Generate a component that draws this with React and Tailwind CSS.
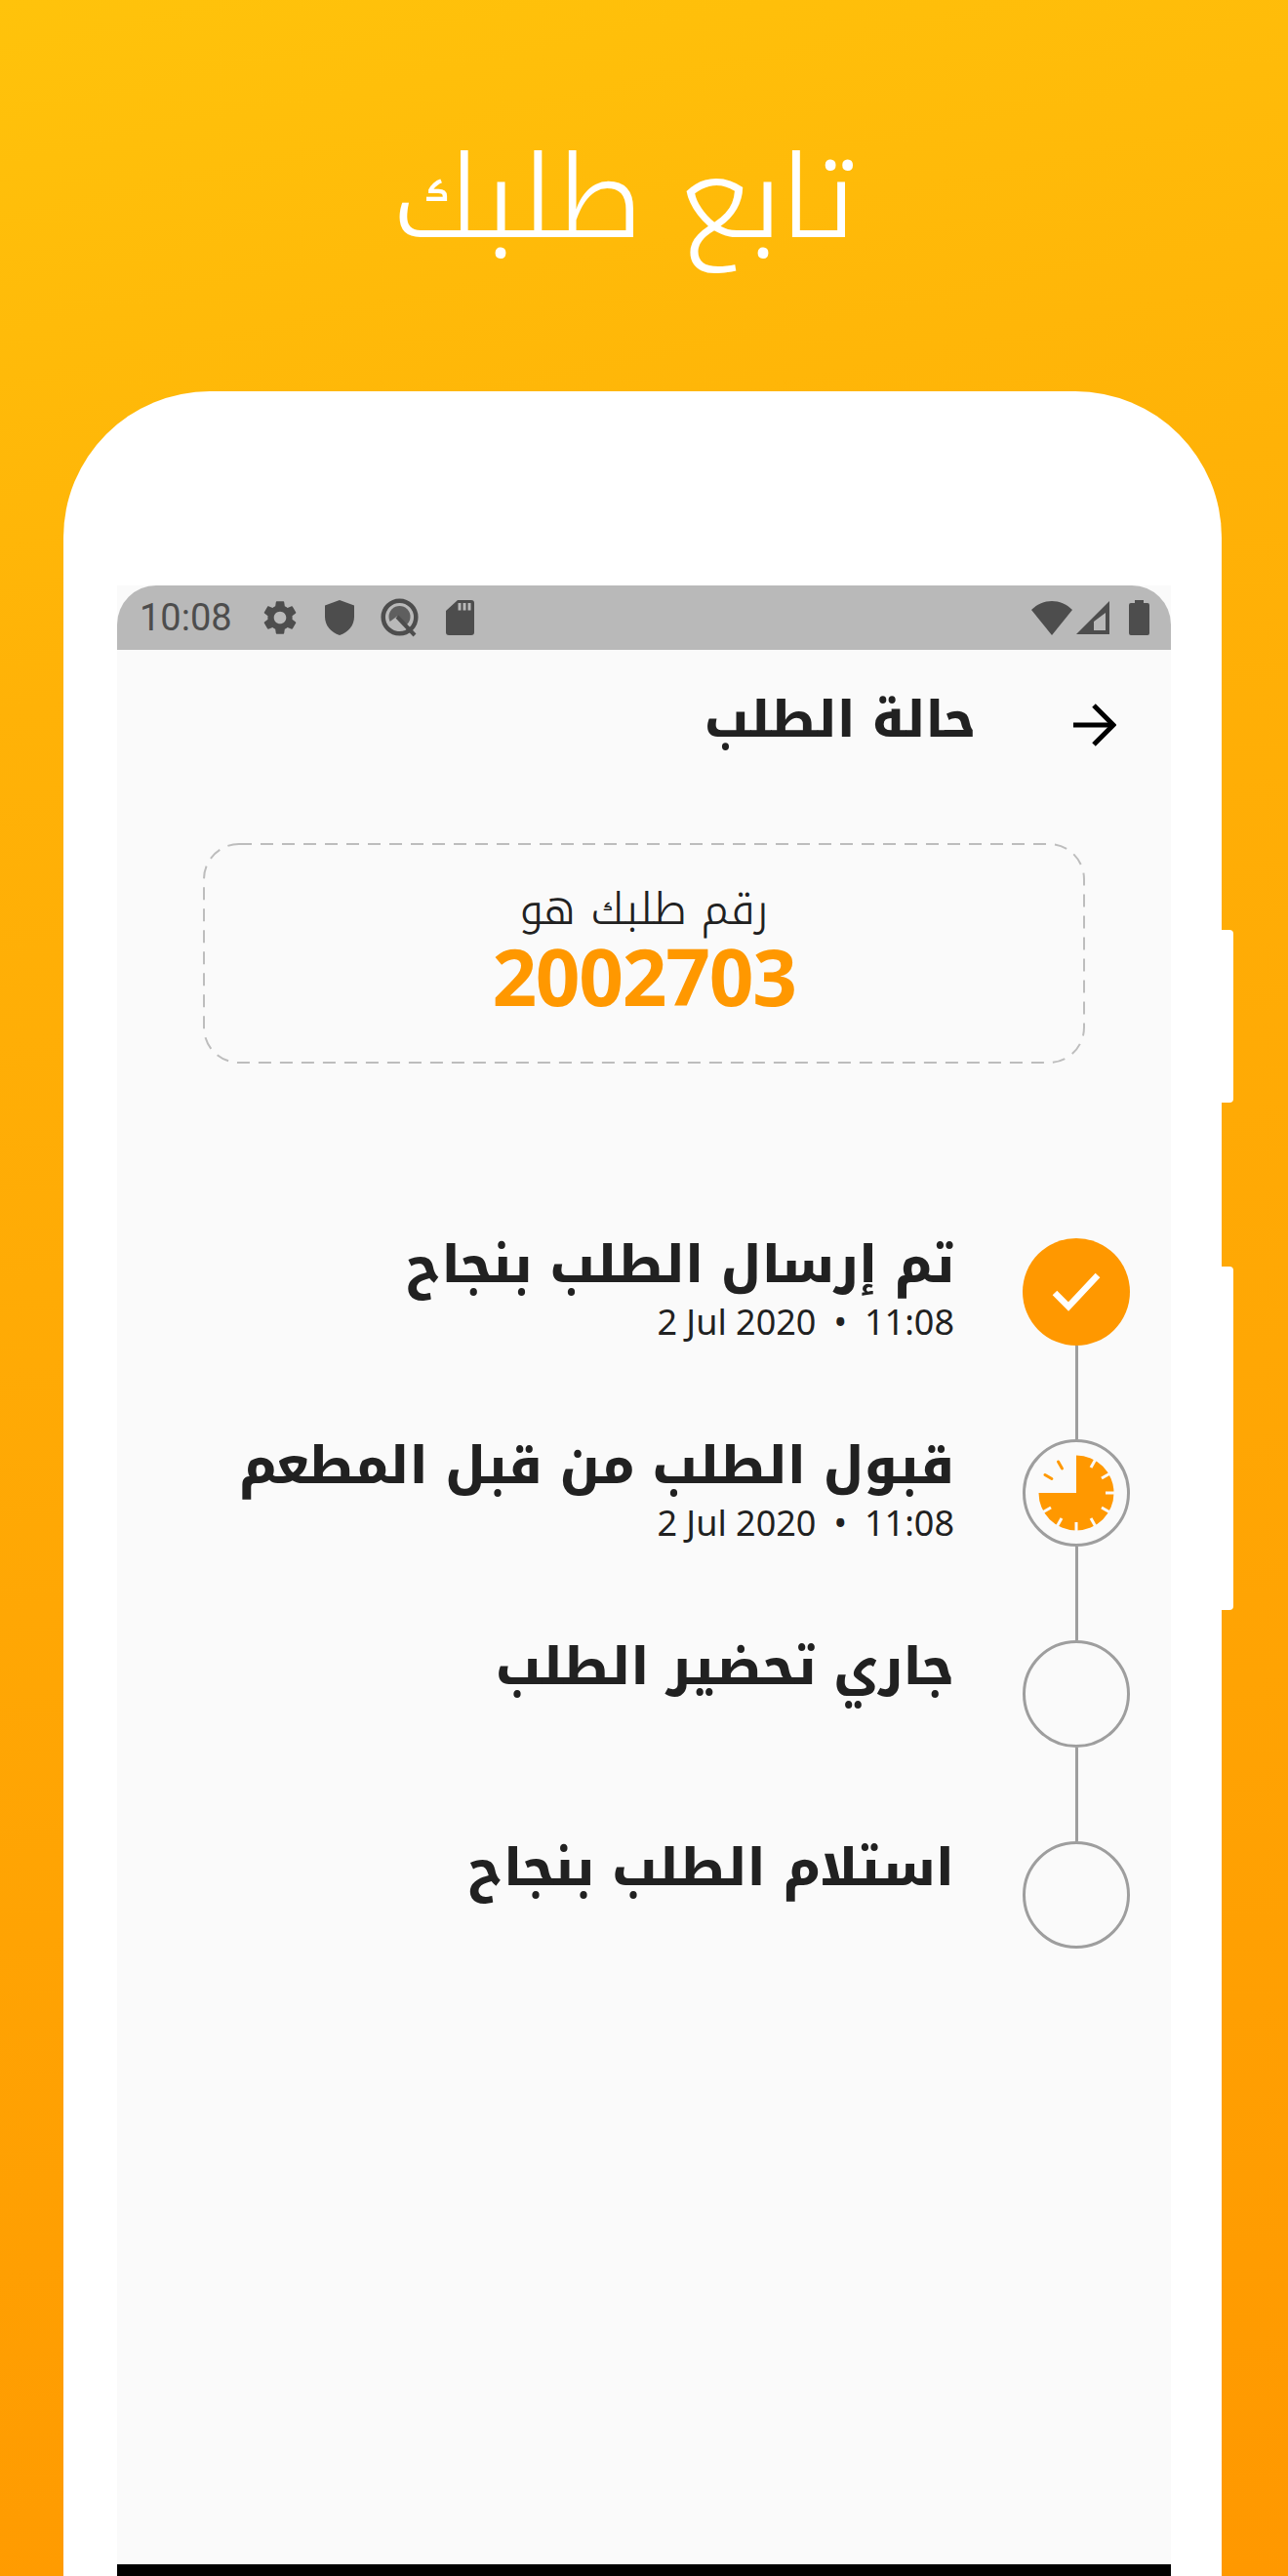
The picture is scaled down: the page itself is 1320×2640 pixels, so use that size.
function StatusIcon({ children, width, height }) {
  return (
    <svg width={width} height={height} viewBox={`0 0 ${width} ${height}`} fill="#4d4d4d" className="block">
      {children}
    </svg>
  );
}

function Gear() {
  return (
    <svg width="42" height="42" viewBox="0 0 24 24" fill="#4d4d4d" className="block">
      <path d="M19.14 12.94c.04-.3.06-.61.06-.94 0-.32-.02-.64-.07-.94l2.03-1.58a.49.49 0 0 0 .12-.61l-1.92-3.32a.49.49 0 0 0-.59-.22l-2.39.96c-.5-.38-1.03-.7-1.62-.94l-.36-2.54a.48.48 0 0 0-.48-.41h-3.84c-.24 0-.43.17-.47.41l-.36 2.54c-.59.24-1.13.57-1.62.94l-2.39-.96c-.22-.08-.47 0-.59.22L2.74 8.87c-.12.21-.08.47.12.61l2.03 1.58c-.05.3-.09.63-.09.94s.02.64.07.94l-2.03 1.58a.49.49 0 0 0-.12.61l1.92 3.32c.12.22.37.29.59.22l2.39-.96c.5.38 1.03.7 1.62.94l.36 2.54c.05.24.24.41.48.41h3.84c.24 0 .44-.17.47-.41l.36-2.54c.59-.24 1.13-.56 1.62-.94l2.39.96c.22.08.47 0 .59-.22l1.92-3.32c.12-.22.07-.47-.12-.61l-2.01-1.58zM12 15.6c-1.98 0-3.6-1.62-3.6-3.6s1.62-3.6 3.6-3.6 3.6 1.62 3.6 3.6-1.62 3.6-3.6 3.6z" />
    </svg>
  );
}

function Shield() {
  return (
    <StatusIcon width={30} height={36}>
      <path d="M15 0 L30 5.5 V17 C30 26 24 33 15 36 C6 33 0 26 0 17 V5.5 Z" />
    </StatusIcon>
  );
}

function QIcon() {
  return (
    <svg width="40" height="40" viewBox="0 0 40 40" fill="none" className="block">
      <circle cx="19.5" cy="19.5" r="16.8" stroke="#4d4d4d" strokeWidth="4.5" />
      <circle cx="19.5" cy="19" r="11" fill="#5f5f5f" />
      <path d="M7 26 L17 18.5 L27 31 L18 34 Z" fill="#b9b9b9" />
      <path d="M17 19 L35 38" stroke="#4d4d4d" strokeWidth="4" />
    </svg>
  );
}

function SdCard() {
  return (
    <svg width="29" height="36" viewBox="0 0 29 36" className="block">
      <path d="M12 0 H26 A3 3 0 0 1 29 3 V33 A3 3 0 0 1 26 36 H3 A3 3 0 0 1 0 33 V11 Z" fill="#4d4d4d" />
      <rect x="12.5" y="3" width="3" height="7.5" fill="#b9b9b9" />
      <rect x="17.5" y="3" width="3" height="7.5" fill="#b9b9b9" />
      <rect x="22.5" y="3" width="3" height="7.5" fill="#b9b9b9" />
    </svg>
  );
}

function Wifi() {
  return (
    <StatusIcon width={42} height={35}>
      <path d="M0 9 C12 -3 30 -3 42 9 L21 35 Z" />
    </StatusIcon>
  );
}

function Signal() {
  return (
    <svg width="34" height="34" viewBox="0 0 34 34" className="block">
      <path d="M34 0 V34 H0 Z" fill="#4d4d4d" />
      <path d="M30 12 V30 H18 V21 Z" fill="#b9b9b9" />
    </svg>
  );
}

function Battery() {
  return (
    <StatusIcon width={21} height={36}>
      <path d="M6 0 H15 V3 H19 A2 2 0 0 1 21 5 V34 A2 2 0 0 1 19 36 H2 A2 2 0 0 1 0 34 V5 A2 2 0 0 1 2 3 H6 Z" />
    </StatusIcon>
  );
}

function Arrow() {
  return (
    <svg width="44" height="44" viewBox="0 0 44 44" fill="none" stroke="#000" strokeWidth="5" className="block">
      <path d="M0 22 H40" />
      <path d="M21 2 L41 22 L21 42" />
    </svg>
  );
}

function DoneCircle() {
  return (
    <div className="flex h-[110px] w-[110px] items-center justify-center rounded-full bg-[#ff9800]">
      <svg width="50" height="40" viewBox="0 0 50 40" fill="none" stroke="#fff" strokeWidth="6.5" className="block">
        <path d="M3 21 L17 35 L47 3" />
      </svg>
    </div>
  );
}

function ClockCircle() {
  const ticks = [30, 60, 90, 120, 150, 180, 210, 240];
  return (
    <div className="flex h-[110px] w-[110px] items-center justify-center rounded-full border-[3px] border-[#9e9e9e] bg-[#fafafa]">
      <svg width="84" height="84" viewBox="-42 -42 84 84" className="block">
        <path d="M0 -38.5 A38.5 38.5 0 1 1 -38.5 0 H0 Z" fill="#ff9800" />
        {ticks.map((a) => (
          <line key={a} x1="0" y1="-30" x2="0" y2="-40" stroke="#fafafa" strokeWidth="3" transform={`rotate(${a})`} />
        ))}
        <line x1="0" y1="-29" x2="0" y2="-37" stroke="#ff9800" strokeWidth="3" strokeLinecap="round" transform="rotate(-30)" />
        <line x1="0" y1="-29" x2="0" y2="-37" stroke="#ff9800" strokeWidth="3" strokeLinecap="round" transform="rotate(-60)" />
      </svg>
    </div>
  );
}

function EmptyCircle() {
  return <div className="h-[110px] w-[110px] rounded-full border-[3px] border-[#9e9e9e] bg-[#fafafa]" />;
}

function Step({ title, time, icon, last }) {
  return (
    <div className="flex h-[206px] flex-row" dir="rtl">
      <div className="relative flex w-[110px] shrink-0 justify-center">
        {!last && <div className="absolute top-[110px] h-[96px] w-[3px] bg-[#9e9e9e]" />}
        {icon}
      </div>
      <div className="mr-[70px] flex flex-col items-start">
        <div className="-mt-[3px] font-['Noto_Kufi_Arabic',sans-serif] text-[52px] font-extrabold leading-[62px] text-[#212121]">{title}</div>
        {time && (
          <div dir="ltr" className="mt-[5px] flex font-['Noto_Sans',sans-serif] text-[36px] leading-[44px] text-[#212121] [font-stretch:85%]">
            <span>2 Jul 2020</span>
            <span className="mx-[18px]">•</span>
            <span>11:08</span>
          </div>
        )}
      </div>
    </div>
  );
}

export default function App() {
  return (
    <div className="relative h-[2640px] w-[1320px] overflow-hidden bg-[linear-gradient(168deg,#ffc30b,#ffb207_25%,#ff9800)]">
      <div className="flex h-[401px] items-start justify-center pr-[40px] pt-[139px]" dir="rtl">
        <h1 className="font-['Noto_Kufi_Arabic',sans-serif] text-[117px] font-light leading-[130px] text-white">تابع طلبك</h1>
      </div>
      <div className="relative ml-[65px] h-[2239px] w-[1187px] rounded-t-[150px] bg-white px-[55px] pt-[199px]">
        <div className="absolute right-[-12px] top-[552px] h-[177px] w-[12px] rounded-r-[4px] bg-white" />
        <div className="absolute right-[-12px] top-[897px] h-[352px] w-[12px] rounded-r-[4px] bg-white" />
        <div className="flex h-[2040px] w-[1080px] flex-col bg-[#fafafa]">
          <div className="flex h-[66px] items-center justify-between rounded-t-[40px] bg-[#b9b9b9] pl-[23px] pr-[22px]">
            <div className="flex items-center">
              <span className="font-['Roboto',sans-serif] text-[38px] leading-[48px] text-[#4d4d4d]">10:08</span>
              <div className="ml-[28px]"><Gear /></div>
              <div className="ml-[25px]"><Shield /></div>
              <div className="ml-[27px]"><QIcon /></div>
              <div className="ml-[27px]"><SdCard /></div>
            </div>
            <div className="flex items-center">
              <Wifi />
              <div className="ml-[4px]"><Signal /></div>
              <div className="ml-[20px]"><Battery /></div>
            </div>
          </div>
          <div className="flex h-[144px] items-center justify-end pr-[56px]">
            <div className="mr-[100px] font-['Noto_Kufi_Arabic',sans-serif] text-[51px] font-extrabold leading-[60px] text-[#212121]" dir="rtl">حالة الطلب</div>
            <div className="mt-[10px]"><Arrow /></div>
          </div>
          <div className="relative mx-[88px] mt-[54px] flex h-[226px] flex-col items-center justify-center pb-[6px]">
            <svg width="904" height="226" viewBox="0 0 904 226" fill="none" className="absolute inset-0">
              <rect x="1" y="1" width="902" height="224" rx="36" stroke="#bdbdbd" strokeWidth="2" strokeDasharray="13 9" />
            </svg>
            <div className="font-['Noto_Kufi_Arabic',sans-serif] text-[45px] font-light leading-[52px] text-[#212121]" dir="rtl">رقم طلبك هو</div>
            <div className="font-['Noto_Sans',sans-serif] text-[80px] font-bold leading-[84px] tracking-[-1.3px] text-[#ff9800] [font-stretch:85%]">2002703</div>
          </div>
          <div className="mt-[179px] pr-[42px]">
            <Step title="تم إرسال الطلب بنجاح" time icon={<DoneCircle />} />
            <Step title="قبول الطلب من قبل المطعم" time icon={<ClockCircle />} />
            <Step title="جاري تحضير الطلب" icon={<EmptyCircle />} />
            <Step title="استلام الطلب بنجاح" last icon={<EmptyCircle />} />
          </div>
          <div className="mt-auto h-[12px] bg-black" />
        </div>
      </div>
    </div>
  );
}
